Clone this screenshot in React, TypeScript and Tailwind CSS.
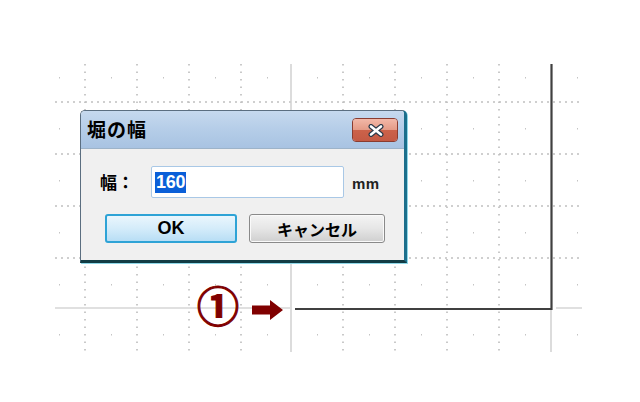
import React from 'react';

// grid positions of the drawing canvas
const cols = [85, 137, 189, 241, 343, 395, 447, 499];
const rows = [102, 154, 206, 258];
const midCols = [59, 111, 163, 215, 267, 317, 369, 421, 473, 525, 577];
const midRows = [77, 128, 180, 232, 284, 334];

const CanvasGrid: React.FC = () => (
  <svg className="absolute inset-0" width={640} height={402} viewBox="0 0 640 402">
    {cols.map((x) => (
      <line key={`v${x}`} x1={x} y1={64} x2={x} y2={352} stroke="#b8b8b8" strokeWidth={1.5} strokeDasharray="1.5 6" />
    ))}
    {rows.map((y) => (
      <line key={`h${y}`} x1={55} y1={y} x2={580} y2={y} stroke="#c0c0c0" strokeWidth={1.3} strokeDasharray="2 4" />
    ))}
    {midCols.map((x) =>
      midRows.map((y) => <rect key={`d${x}-${y}`} x={x} y={y} width={1} height={1.5} fill="#c4c4c4" />)
    )}
    {/* solid guides */}
    <line x1={291} y1={64} x2={291} y2={352} stroke="#d0d0d0" strokeWidth={1.5} />
    <line x1={55} y1={308} x2={290} y2={308} stroke="#d6d6d6" strokeWidth={1.5} />
    <line x1={556} y1={308} x2={582} y2={308} stroke="#d6d6d6" strokeWidth={1.5} />
    <line x1={551} y1={310} x2={551} y2={352} stroke="#d0d0d0" strokeWidth={1.5} />
    {/* wall line */}
    <path d="M295 309 H551.5 V64" fill="none" stroke="#404040" strokeWidth={2.2} />
    {/* arrow */}
    <path d="M252 305.5 H270 V300 L283 310 L270 320 V314.5 H252 Z" fill="#800000" />
  </svg>
);

const App: React.FC = () => {
  return (
    <div className="relative w-[640px] h-[402px] bg-white overflow-hidden" style={{ fontFamily: '"Liberation Sans", "Noto Sans CJK JP", sans-serif' }}>
      <CanvasGrid />

      {/* step marker */}
      <div className="absolute left-[197px] top-[283px] text-[42px] leading-none font-bold text-[#800000] [-webkit-text-stroke:1.2px_#800000] font-['Noto_Sans_CJK_JP',sans-serif]">①</div>

      {/* dialog */}
      <div className="absolute left-[80px] top-[110px] w-[327px] h-[153px] rounded-t-[5px] border border-[#5b6e80] border-b-[3px] border-b-[#123c44] border-r-[3px] border-r-[#1c6f8c] bg-[#f0f0f0] flex flex-col overflow-hidden shadow-[1px_1px_0_#8fd8e8]">
        <div className="h-[38px] flex items-center justify-between pl-[6px] pr-[6px] bg-gradient-to-b from-[#c6d9ee] via-[#b5cde8] to-[#a8c3e2] border-b border-[#9db3c9]">
          <span className="text-[19px] font-bold text-black font-['Noto_Sans_CJK_JP',sans-serif] tracking-[1px]">堀の幅</span>
          <div className="w-[46px] h-[24px] rounded-[4px] border border-[#8a3c30] flex flex-col overflow-hidden relative shadow-[inset_0_0_0_1px_#f6c8b8]">
            <div className="flex-1 bg-gradient-to-b from-[#f2b8a8] to-[#e49a86]" />
            <div className="flex-1 bg-gradient-to-b from-[#cc624a] to-[#c45a44]" />
            <svg className="absolute left-[14px] top-[5px]" width="18" height="13" viewBox="0 0 18 13">
              <path d="M4 2.5 L14 10.5 M14 2.5 L4 10.5" stroke="#2d3a4a" strokeWidth={5} strokeLinecap="round" />
              <path d="M4 2.5 L14 10.5 M14 2.5 L4 10.5" stroke="#ffffff" strokeWidth={2.6} strokeLinecap="round" />
            </svg>
          </div>
        </div>

        <div className="flex-1 flex flex-col pl-[19px] pt-[17px]">
          <div className="flex items-center h-[32px]">
            <span className="w-[51px] text-[17px] font-bold text-black font-['Noto_Sans_CJK_JP',sans-serif]">幅：</span>
            <div className="w-[193px] h-[32px] bg-white border border-[#a9c8e6] rounded-[2px] flex items-center pl-[3px]">
              <span className="bg-[#0a5fd8] text-white text-[18px] font-bold leading-[21px] px-[1px] tracking-[-0.3px]">160</span>
            </div>
            <span className="ml-[8px] mt-[4px] text-[15px] font-bold text-[#222] tracking-[0.5px]">mm</span>
          </div>

          <div className="flex items-center gap-[12px] mt-[16px] ml-[5px]">
            <div className="w-[132px] h-[29px] rounded-[3px] border-2 border-[#2ea3d6] bg-gradient-to-b from-[#eaf6fd] via-[#d4ecfa] to-[#b8def5] flex items-center justify-center text-[18px] font-bold text-black">OK</div>
            <div className="w-[136px] h-[29px] rounded-[3px] border border-[#8a8a8a] bg-gradient-to-b from-[#f4f4f4] via-[#e6e6e6] to-[#cfcfcf] flex items-center justify-center text-[16px] font-bold text-black font-['Noto_Sans_CJK_JP',sans-serif] shadow-[inset_0_0_0_1px_#fafafa]">キャンセル</div>
          </div>
        </div>
      </div>
    </div>
  );
};

export default App;
